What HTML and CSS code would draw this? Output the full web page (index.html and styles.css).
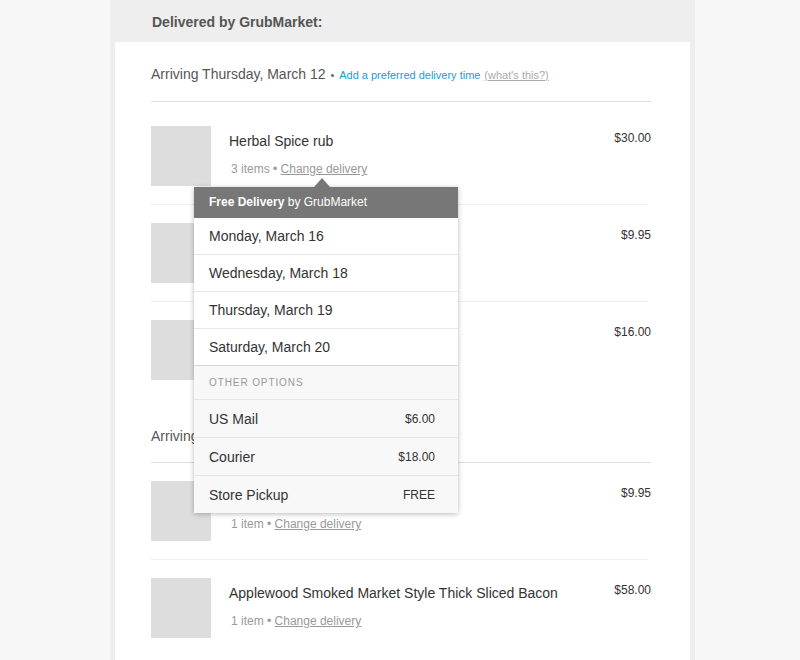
FILE: index.html
```html
<!DOCTYPE html>
<html>
<head>
<meta charset="utf-8">
<link rel="stylesheet" href="styles.css">
</head>
<body>
<div class="card">
  <div class="card-head">Delivered by GrubMarket:</div>
  <div class="card-body">
    <section class="group">
      <div class="group-head">
        <span>Arriving Thursday, March 12</span>
        <span class="sep">•</span>
        <a class="blue">Add a preferred delivery time</a>
        <a class="muted">(what's this?)</a>
      </div>
      <div class="row">
        <div class="thumb"></div>
        <div class="info">
          <div class="title">Herbal Spice rub</div>
          <div class="meta">3 items • <a class="change">Change delivery</a>
            <div class="popover">
              <div class="pop-head"><b>Free Delivery</b> by GrubMarket</div>
              <div class="dates">
                <div class="opt">Monday, March 16</div>
                <div class="opt">Wednesday, March 18</div>
                <div class="opt">Thursday, March 19</div>
                <div class="opt">Saturday, March 20</div>
              </div>
              <div class="others">
                <div class="others-head">OTHER OPTIONS</div>
                <div class="opt"><span>US Mail</span><span class="cost">$6.00</span></div>
                <div class="opt"><span>Courier</span><span class="cost">$18.00</span></div>
                <div class="opt"><span>Store Pickup</span><span class="cost">FREE</span></div>
              </div>
            </div>
          </div>
        </div>
        <div class="price">$30.00</div>
      </div>
      <div class="row">
        <div class="thumb"></div>
        <div class="info"></div>
        <div class="price">$9.95</div>
      </div>
      <div class="row">
        <div class="thumb"></div>
        <div class="info"></div>
        <div class="price">$16.00</div>
      </div>
    </section>
    <section class="group">
      <div class="group-head">
        <span>Arriving</span>
      </div>
      <div class="row">
        <div class="thumb"></div>
        <div class="info">
          <div class="title"></div>
          <div class="meta">1 item • <a class="change">Change delivery</a></div>
        </div>
        <div class="price">$9.95</div>
      </div>
      <div class="row">
        <div class="thumb"></div>
        <div class="info">
          <div class="title">Applewood Smoked Market Style Thick Sliced Bacon</div>
          <div class="meta">1 item • <a class="change">Change delivery</a></div>
        </div>
        <div class="price">$58.00</div>
      </div>
    </section>
  </div>
</div>
</body>
</html>
```

FILE: styles.css
```css
html, body {
  margin: 0;
  padding: 0;
}
body {
  background: #f7f7f7;
  font-family: "Liberation Sans", Arial, sans-serif;
  color: #333;
}
.card {
  width: 575px;
  margin-left: 110px;
  border-style: solid;
  border-color: #eeeeee;
  border-width: 0 5px;
  background: #fff;
  min-height: 660px;
}
.card-head {
  background: #eeeeee;
  padding: 13px 37px 11px;
  font-size: 14px;
  line-height: 18px;
  font-weight: bold;
  color: #555;
}
.card-body {
  padding: 0 39px 0 36px;
}
.group-head {
  padding: 22px 0 16px;
  line-height: 20px;
  font-size: 14px;
  color: #555;
  border-bottom: 1px solid #dddddd;
}
.group-head .sep {
  font-size: 11px;
  color: #666;
  margin: 0 1px;
}
.blue {
  font-size: 11px;
  color: #1f9ad6;
}
.muted {
  font-size: 11px;
  color: #aaa;
  text-decoration: underline;
}
.group + .group {
  margin-top: 6px;
}
.row {
  display: flex;
  align-items: flex-start;
  padding: 18px 0;
  margin-right: 3px;
  border-bottom: 1px solid #eeeeee;
}
.group:first-child .group-head + .row {
  padding-top: 24px;
}
.row:last-child {
  border-bottom: 0;
}
.thumb {
  flex: none;
  width: 60px;
  height: 60px;
  background: #dddddd;
}
.info {
  flex: 1;
  margin-left: 18px;
}
.title {
  min-height: 20px;
  font-size: 14px;
  line-height: 20px;
  margin-top: 5px;
  color: #333;
}
.meta {
  position: relative;
  display: inline-block;
  margin-top: 10px;
  margin-left: 2px;
  font-size: 12px;
  line-height: 16px;
  color: #9a9a9a;
}
.change {
  color: #999;
  text-decoration: underline;
}
.price {
  font-size: 12px;
  line-height: 16px;
  margin-top: 4px;
  margin-right: -3px;
  color: #333;
}
.popover {
  position: absolute;
  z-index: 5;
  top: calc(100% + 10px);
  left: -37px;
  width: 264px;
  background: #fff;
  box-shadow: 0 1px 5px rgba(0, 0, 0, 0.28);
  color: #333;
}
.popover::before {
  content: "";
  position: absolute;
  top: -9px;
  left: 120px;
  border-left: 8px solid transparent;
  border-right: 8px solid transparent;
  border-bottom: 9px solid #777;
}
.pop-head {
  background: #777777;
  color: #fff;
  font-size: 12px;
  line-height: 31px;
  padding: 0 15px;
}
.pop-head b {
  font-weight: bold;
}
.opt {
  display: flex;
  justify-content: space-between;
  align-items: center;
  height: 36px;
  padding: 0 23px 0 15px;
  font-size: 14px;
  border-bottom: 1px solid #e8e8e8;
}
.dates .opt:last-child {
  border-bottom-color: #d8d8d8;
}
.others {
  background: #f8f8f8;
}
.others-head {
  height: 33px;
  line-height: 33px;
  padding: 0 15px;
  font-size: 10px;
  letter-spacing: 0.9px;
  color: #999;
  border-bottom: 1px solid #e6e6e6;
}
.others .opt {
  height: 37px;
  border-bottom-color: #e6e6e6;
}
.others .opt:last-child {
  border-bottom: 0;
}
.cost {
  font-size: 12px;
  color: #333;
}
```
